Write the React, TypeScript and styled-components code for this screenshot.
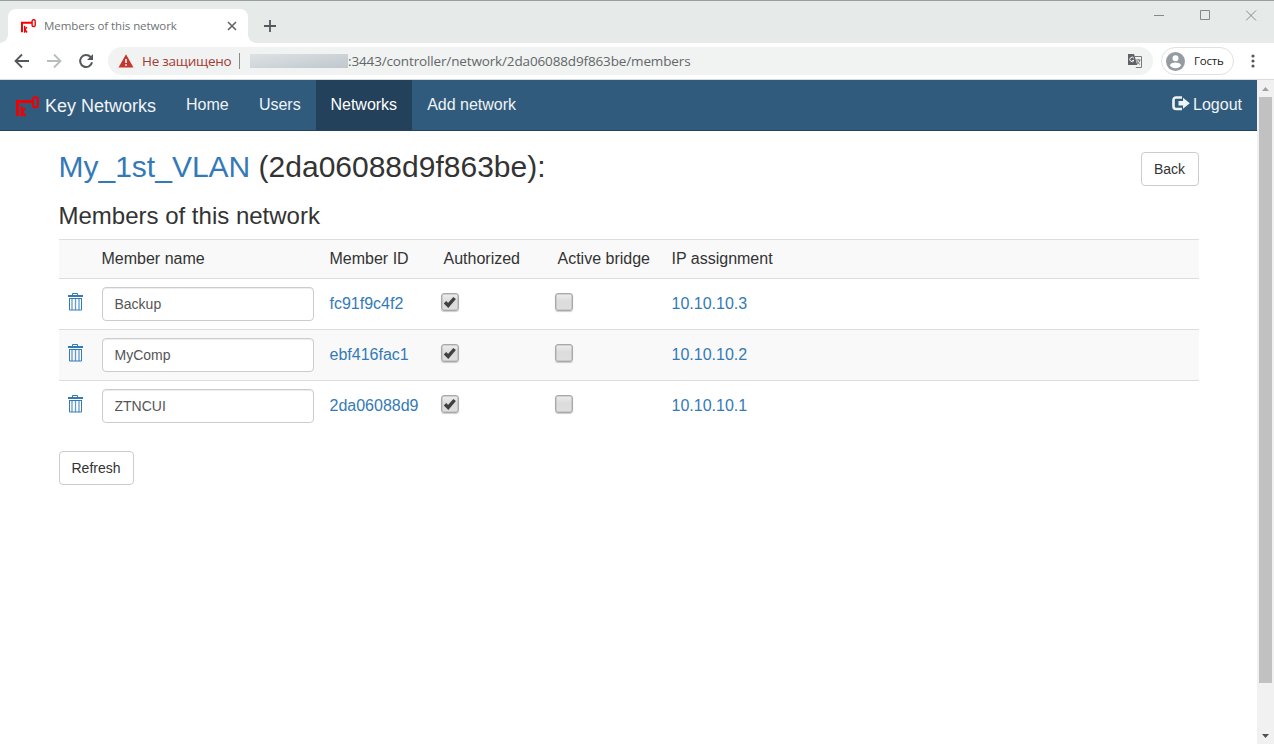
import React from "react";
import styled, { createGlobalStyle } from "styled-components";

const Global = createGlobalStyle`
  * { box-sizing: border-box; }
  html, body { margin: 0; padding: 0; background: #fff; overflow: hidden; }
  body { font-family: "Liberation Sans", Arial, sans-serif; color: #333; }
  svg { display: block; flex: none; }
`;

const Window = styled.div`
  width: 1274px;
  height: 744px;
  display: flex;
  flex-direction: column;
  background: #fff;
`;

const TitleBar = styled.div`
  height: 43px;
  flex: none;
  display: flex;
  align-items: flex-end;
  background: #e6ebea;
  border-top: 1px solid #999d9e;
`;

const Flare = styled.div<{ $side: "left" | "right" }>`
  width: 8px;
  height: 8px;
  background: radial-gradient(circle at ${(p) => (p.$side === "left" ? "0 0" : "8px 0")}, transparent 7.5px, #fff 8px);
`;

const Tab = styled.div`
  width: 240px;
  height: 34px;
  display: flex;
  align-items: center;
  padding: 0 11px 0 13px;
  background: #fff;
  border-radius: 8px 8px 0 0;
`;

const TabTitle = styled.span`
  flex: 1;
  margin-left: 8px;
  font: 11.5px/16px "Open Sans", "Noto Sans", sans-serif;
  letter-spacing: -0.08px;
  color: #6c7275;
  white-space: nowrap;
`;

const NewTab = styled.div`
  padding: 0 0 11px 8px;
`;

const WindowControls = styled.div`
  display: flex;
  align-self: flex-start;
  gap: 35px;
  margin-left: auto;
  padding: 9px 17px 0 0;
`;

const Toolbar = styled.div`
  height: 37px;
  flex: none;
  display: flex;
  align-items: center;
  padding: 0 15px 0 14px;
  border-bottom: 1px solid #d9dcdd;
  background: #fff;
`;

const NavIcons = styled.div`
  display: flex;
  gap: 16px;
  margin-right: 14px;
`;

const AddressBar = styled.div`
  width: 1045px;
  height: 28px;
  display: flex;
  align-items: center;
  padding: 0 11px 0 10px;
  border-radius: 14px;
  background: #f0f3f2;
  font: 13.5px/20px "Open Sans", "Noto Sans", sans-serif;
  white-space: nowrap;
`;

const Warning = styled.span`
  margin-left: 8px;
  width: 89px;
  color: #a63a32;
  letter-spacing: -0.25px;
`;

const Divider = styled.span`
  width: 1px;
  height: 16px;
  margin: 0 10px 0 8px;
  background: #8a8d8f;
`;

const HiddenHost = styled.span`
  width: 98px;
  height: 14px;
  background: linear-gradient(170deg, #dde2e3, #c0c8ce);
`;

const Address = styled.span`
  flex: 1;
  color: #636769;
  letter-spacing: -0.14px;
`;

const Profile = styled.div`
  width: 73px;
  height: 28px;
  display: flex;
  align-items: center;
  gap: 9px;
  margin: 0 17px 0 8px;
  padding-left: 4px;
  border: 1px solid #dfe1e3;
  border-radius: 14px;
  font: 11.5px/16px "Open Sans", "Noto Sans", sans-serif;
  letter-spacing: -0.2px;
  color: #222;
`;

const Viewport = styled.div`
  flex: 1;
  min-height: 0;
  display: flex;
`;

const Page = styled.div`
  flex: 1;
`;

const Navbar = styled.nav`
  height: 51px;
  display: flex;
  padding-right: 15px;
  background: #305b7d;
  border-bottom: 1px solid #23415a;
  color: #f0f3f5;
  font-size: 16px;
  line-height: 20px;
`;

const Brand = styled.div`
  width: 171px;
  display: flex;
  align-items: center;
  gap: 6px;
  padding: 2px 0 0 16px;
  font-size: 18px;
  white-space: nowrap;
`;

const NavItem = styled.a<{ $active?: boolean }>`
  padding: 15px ${(p) => (p.$active ? "15px 0 14.6px" : "15.2px 0 15px")};
  background: ${(p) => (p.$active ? "#23415a" : "transparent")};
  color: ${(p) => (p.$active ? "#fff" : "#f0f3f5")};
  white-space: nowrap;
`;

const Logout = styled.a`
  display: flex;
  align-items: flex-start;
  gap: 3px;
  margin-left: auto;
  padding-top: 15px;
`;

const Content = styled.main`
  width: 1140px;
  margin-left: 59px;
`;

const Heading = styled.div`
  display: flex;
  justify-content: space-between;
  align-items: flex-start;
  padding-top: 19px;
`;

const NetworkTitle = styled.h2`
  margin: 0 0 0 -0.5px;
  font-size: 30px;
  line-height: 33px;
  font-weight: 400;
`;

const Subtitle = styled.h3`
  margin: 17px 0 10px -0.5px;
  font-size: 24px;
  line-height: 26px;
  font-weight: 400;
`;

const Link = styled.a`
  color: #337ab7;
`;

const Button = styled.button`
  height: 34px;
  margin: 0;
  padding: 0 12.5px 0 11.5px;
  border: 1px solid #ccc;
  border-radius: 4px;
  background: #fff;
  color: #333;
  font: 14px/20px "Liberation Sans", Arial, sans-serif;
`;

const BackButton = styled(Button)`
  width: 58px;
  margin-top: 2px;
`;

const Table = styled.div`
  margin-bottom: 20px;
  font-size: 16px;
  line-height: 22px;
`;

const Row = styled.div<{ $header?: boolean; $striped?: boolean }>`
  display: grid;
  grid-template-columns: 35px 228px 114px 114px 114px 1fr;
  height: ${(p) => (p.$header ? "39px" : "51px")};
  border-top: 1px solid #ddd;
  background: ${(p) => (p.$striped ? "#f9f9f9" : "#fff")};
`;

const Cell = styled.div<{ $top?: number; $left?: number }>`
  padding: ${(p) => p.$top ?? 8}px 8px 0 ${(p) => p.$left ?? 7.5}px;
  white-space: nowrap;
`;

const NameInput = styled.input`
  display: block;
  width: 212px;
  height: 34px;
  padding: 6px 11.5px;
  border: 1px solid #ccc;
  border-radius: 4px;
  box-shadow: inset 0 1px 1px rgba(0, 0, 0, 0.075);
  color: #555;
  font: 14px/20px "Liberation Sans", Arial, sans-serif;
`;

const Check = styled.span`
  display: flex;
  align-items: center;
  justify-content: center;
  width: 18px;
  height: 18px;
  border: 1px solid #a9a9a9;
  border-radius: 3px;
  background: linear-gradient(#ededed, #dcdcdc 45%, #dedede);
  box-shadow: 0 1px 1px rgba(0, 0, 0, 0.2), inset 0 0 0 0.5px #b5b5b5;
`;

const Scrollbar = styled.div`
  width: 17px;
  display: flex;
  flex-direction: column;
  align-items: center;
  background: #f1f1f1;
`;

const Arrow = styled.div`
  height: 17px;
  display: flex;
  align-items: center;
`;

const Thumb = styled.div`
  width: 13px;
  height: 586px;
  margin-bottom: auto;
  background: #c1c1c1;
`;

const KeyLogo = ({ width, height }: { width: number; height: number }) => (
  <svg width={width} height={height} viewBox="0 0 23 21" preserveAspectRatio="none" fill="none" stroke="#f00000">
    <path d="M1.5 20V5.5H17" strokeWidth="3" />
    <path d="M5.6 10v10.5M9 12.2l-3 3.6 3.4 4.4" strokeWidth="2.1" />
    <rect x="17" y="1.2" width="4.8" height="10" rx="2" strokeWidth="2.1" />
  </svg>
);

const Trash = () => (
  <svg width="15" height="18" viewBox="0 0 15 18" fill="none" stroke="#337ab7">
    <path d="M4.5 2.5V.5h5v2" />
    <path d="M0 3h15" strokeWidth="2" />
    <path d="M1.5 5v12h12V5M1.5 5.5h12" />
    <path d="M4 5v12M7.5 5v12M11 5v12" strokeWidth="1.3" opacity=".75" />
  </svg>
);

const Checkbox = ({ checked }: { checked?: boolean }) => (
  <Check role="checkbox" aria-checked={!!checked}>
    {checked && (
      <svg width="14" height="14" viewBox="0 0 14 14">
        <path d="M2 7.2 5.2 10.4 11.6 3" fill="none" stroke="#404040" strokeWidth="3.4" />
      </svg>
    )}
  </Check>
);

const members = [
  { name: "Backup", id: "fc91f9c4f2", ip: "10.10.10.3" },
  { name: "MyComp", id: "ebf416fac1", ip: "10.10.10.2" },
  { name: "ZTNCUI", id: "2da06088d9", ip: "10.10.10.1" },
];

export default function App() {
  return (
    <Window>
      <Global />
      <TitleBar>
        <Flare $side="left" />
        <Tab>
          <KeyLogo width={15} height={14} />
          <TabTitle>Members of this network</TabTitle>
          <svg width="10" height="10" viewBox="0 0 10 10" stroke="#5f6368" strokeWidth="1.6">
            <path d="m1 1 8 8M9 1 1 9" />
          </svg>
        </Tab>
        <Flare $side="right" />
        <NewTab>
          <svg width="12" height="12" viewBox="0 0 12 12" stroke="#54585a" strokeWidth="1.8">
            <path d="M6 0v12M0 6h12" />
          </svg>
        </NewTab>
        <WindowControls>
          <svg width="11" height="11" stroke="#85898a"><path d="M0 5.5h10" /></svg>
          <svg width="11" height="11" fill="none" stroke="#85898a"><path d="M.5.5h9v9H.5z" /></svg>
          <svg width="11" height="11" stroke="#85898a"><path d="m0 .5 10 10M10 .5l-10 10" /></svg>
        </WindowControls>
      </TitleBar>

      <Toolbar>
        <NavIcons>
          <svg width="16" height="16" viewBox="0 0 16 16" fill="none" stroke="#54585b" strokeWidth="1.8">
            <path d="M15 8H2.5M8 1.5 1.5 8 8 14.5" />
          </svg>
          <svg width="16" height="16" viewBox="0 0 16 16" fill="none" stroke="#b9bcbd" strokeWidth="1.8">
            <path d="M1 8h12.5M8 1.5 14.5 8 8 14.5" />
          </svg>
          <svg width="16" height="16" viewBox="0 0 16 16" fill="none" stroke="#54585b" strokeWidth="2">
            <path d="M14 9.2A6 6 0 1 1 12.6 4" />
            <path d="M15 1v6H9z" fill="#54585b" stroke="none" />
          </svg>
        </NavIcons>
        <AddressBar>
          <svg width="16" height="14" viewBox="0 0 16 14">
            <path d="M8 .3 15.5 13.5H.5z" fill="#c5372c" />
            <path d="M8 5v4M8 10.2v1.6" stroke="#fff" strokeWidth="1.6" />
          </svg>
          <Warning>Не защищено</Warning>
          <Divider />
          <HiddenHost />
          <Address>:3443/controller/network/2da06088d9f863be/members</Address>
          <svg width="14" height="14" viewBox="0 0 14 14" fill="none">
            <path d="M6.5 2.5h7v11H7.8" stroke="#777b7e" />
            <path d="M0 0h6l3.3 11H0z" fill="#5f6368" />
            <path d="M5.9 4.2A2.2 2.2 0 1 0 6 6.4H4.2" stroke="#fff" />
            <path d="M8 6h4.6M10.3 5v1M11.8 6c-.3 1.7-1.3 3-2.7 4M8.8 7c.7 1.4 1.8 2.6 3.2 3.5" stroke="#777b7e" />
          </svg>
        </AddressBar>
        <Profile>
          <svg width="19" height="19" viewBox="0 0 19 19">
            <circle cx="9.5" cy="9.5" r="9.5" fill="#949ba1" />
            <circle cx="9.5" cy="6.3" r="3" fill="#fff" />
            <path d="M3.8 13.2c1.2-2 3.8-2.6 5.7-2.6s4.5.6 5.7 2.6c-1.3 2-3.4 3-5.7 3s-4.4-1-5.7-3z" fill="#fff" />
          </svg>
          Гость
        </Profile>
        <svg width="4" height="14" viewBox="0 0 4 14" fill="#54585b">
          <circle cx="2" cy="2" r="1.6" />
          <circle cx="2" cy="7" r="1.6" />
          <circle cx="2" cy="12" r="1.6" />
        </svg>
      </Toolbar>

      <Viewport>
        <Page>
          <Navbar>
            <Brand>
              <KeyLogo width={23} height={21} />
              Key Networks
            </Brand>
            <NavItem>Home</NavItem>
            <NavItem>Users</NavItem>
            <NavItem $active>Networks</NavItem>
            <NavItem>Add network</NavItem>
            <Logout>
              <svg width="18" height="17" viewBox="0 0 18 17">
                <path d="M10 2.5H4.3Q1.5 2.5 1.5 5v6.5Q1.5 14 4.3 14H10" fill="none" stroke="#f0f3f5" strokeWidth="2.6" />
                <path d="M6.5 6H11V2.8L17.8 8.3 11 13.8v-3.3H6.5z" fill="#f0f3f5" />
              </svg>
              Logout
            </Logout>
          </Navbar>

          <Content>
            <Heading>
              <NetworkTitle>
                <Link>My_1st_VLAN</Link> (2da06088d9f863be):
              </NetworkTitle>
              <BackButton>Back</BackButton>
            </Heading>
            <Subtitle>Members of this network</Subtitle>
            <Table>
              <Row $header $striped>
                <Cell />
                <Cell>Member name</Cell>
                <Cell>Member ID</Cell>
                <Cell>Authorized</Cell>
                <Cell>Active bridge</Cell>
                <Cell>IP assignment</Cell>
              </Row>
              {members.map((m, i) => (
                <Row key={m.id} $striped={i % 2 === 1}>
                  <Cell $top={14} $left={9}><Trash /></Cell>
                  <Cell $left={8}><NameInput defaultValue={m.name} /></Cell>
                  <Cell $top={14}><Link>{m.id}</Link></Cell>
                  <Cell $top={14} $left={5}><Checkbox checked /></Cell>
                  <Cell $top={14} $left={5}><Checkbox /></Cell>
                  <Cell $top={14}><Link>{m.ip}</Link></Cell>
                </Row>
              ))}
            </Table>
            <Button>Refresh</Button>
          </Content>
        </Page>
        <Scrollbar>
          <Arrow>
            <svg width="7" height="4"><path d="M0 4 3.5 0 7 4z" fill="#a0a0a0" /></svg>
          </Arrow>
          <Thumb />
          <Arrow>
            <svg width="7" height="4"><path d="M0 0h7L3.5 4z" fill="#505050" /></svg>
          </Arrow>
        </Scrollbar>
      </Viewport>
    </Window>
  );
}
